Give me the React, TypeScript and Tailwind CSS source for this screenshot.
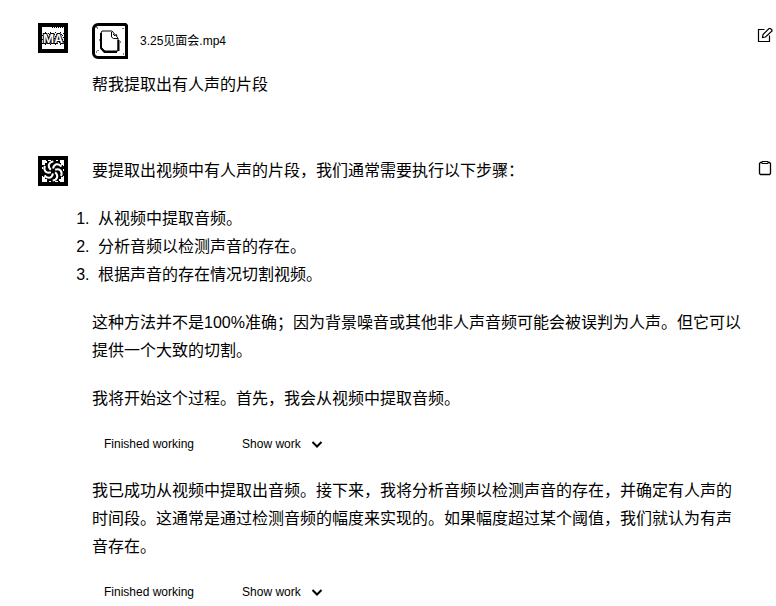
import type { ReactNode } from "react";

function UserAvatar() {
  return (
    <div className="flex size-[30px] shrink-0 items-center justify-center border-4 border-black bg-white">
      <svg width="22" height="22" viewBox="0 0 22 22" role="img" aria-label="MA">
        <defs>
          <pattern id="grain" width="5" height="4" patternUnits="userSpaceOnUse">
            <path d="M0 0h1v1H0zM3 1h1v1H3zM1 2h1v1H1zM4 3h1v1H4zM2 3h1v1H2z" />
          </pattern>
        </defs>
        <path d="M10 0h1v1h-1zM12 0h1v1h-1zM14 0h1v1h-1zM16 0h1v1h-1zM18 0h1v1h-1zM20 0h1v1h-1z" />
        <path d="M0 5h22v13H0z" fill="url(#grain)" />
        <text
          x="11"
          y="16"
          textAnchor="middle"
          fontSize="12"
          fontWeight="600"
          fontFamily="Inter, sans-serif"
          fill="#fff"
          stroke="#000"
          strokeWidth="2"
          paintOrder="stroke"
        >
          MA
        </text>
      </svg>
    </div>
  );
}

function AssistantAvatar() {
  return (
    <div className="size-[30px] shrink-0 bg-black">
      <svg width="30" height="30" viewBox="0 0 30 30" fill="none" stroke="#fff" aria-hidden="true">
        <path
          d="M4 4.500h4M10 4.500h3M18 4.500h2M22 4.500h4M4.500 5v4M4.500 11v2M4.500 20v5M25.500 5v5M25.500 13v2M25.500 20v5M4 25.500h5M11 25.500h2M17 25.500h3M22 25.500h4"
          strokeWidth="1"
        />
        <path
          d="M5 6h3M5 8h2M22 6h3M23 8h2M5 22h2M5 24h4M23 22h2M21 24h4M8 5v2M22 23v2"
          strokeWidth="2"
        />
        {[0, 60, 120, 180, 240, 300].map((angle) => (
          <path
            key={angle}
            d="M15 12.500C16 8 20 6.500 23.500 10.500"
            strokeWidth="2"
            transform={`rotate(${angle} 15 15)`}
          />
        ))}
        <path d="M13.500 13.500h3v3h-3z" fill="#000" stroke="none" />
      </svg>
    </div>
  );
}

function FileIcon() {
  return (
    <svg width="36" height="36" viewBox="0 0 36 36" fill="none" stroke="#000" aria-hidden="true">
      <path
        d="M6 1.500H33.500L34.500 2.500V34.500H6A4.500 4.500 0 0 1 1.500 30V6A4.500 4.500 0 0 1 6 1.500z"
        strokeWidth="3"
      />
      <path d="M10 8h10l6 7v13H13l-4-3V10z" strokeWidth="1" />
      <path d="M9 10v15l3.500 4H25M26.500 17v11" strokeWidth="2" />
      <path d="M19.500 9v5l2 1.500H26M21 11l2 2M24 11l1 2" strokeWidth="1" />
      <path d="M4 29h1M6 27v1M31 5v1M5 5h1M7 17h1M28 19h1M4 4h1M31 31h1" strokeWidth="1" />
    </svg>
  );
}

function EditIcon() {
  return (
    <svg width="16" height="16" viewBox="0 0 16 16" fill="none" stroke="#000" strokeWidth="1.200">
      <path d="M7.500 2.500h-6v12h11V8.500" />
      <path d="M5.500 10.500l.5-3L12 1.500h1.500L15 3v1L8.500 10z" />
    </svg>
  );
}

function ClipboardIcon() {
  return (
    <svg width="16" height="16" viewBox="0 0 16 16" fill="none" stroke="#000" strokeWidth="1.300">
      <path d="M5 2.500H3.500l-1 1v10l1 1h9l1-1v-10l-1-1H11" />
      <path d="M5 3.500V1.500h6v2z" strokeWidth="1" />
    </svg>
  );
}

function Message({
  avatar,
  action,
  children,
}: {
  avatar: ReactNode;
  action: ReactNode;
  children: ReactNode;
}) {
  return (
    <article className="flex items-start pr-[3px] pl-[38px]">
      {avatar}
      <div className="ml-6 flex min-w-0 flex-1 flex-col">{children}</div>
      <div className="ml-3 pt-1">{action}</div>
    </article>
  );
}

function WorkStatus() {
  return (
    <div className="flex h-6 items-center pb-0.5 pl-3 text-xs">
      <span>Finished working</span>
      <button type="button" className="ml-12 flex items-center gap-2">
        Show work
        <svg width="16" height="16" viewBox="0 0 16 16" fill="none" stroke="#000" strokeWidth="2">
          <path d="M3.500 6L8 10.500 12.500 6" />
        </svg>
      </button>
    </div>
  );
}

export default function App() {
  return (
    <main className="flex flex-col gap-[57px] bg-white pt-[23px] font-['Liberation_Sans','Noto_Sans_CJK_SC',sans-serif] text-base leading-7 text-black">
      <Message
        avatar={<UserAvatar />}
        action={
          <button type="button" aria-label="Edit" className="block">
            <EditIcon />
          </button>
        }
      >
        <div className="flex items-center gap-3 text-xs">
          <FileIcon />
          <span>3.25见面会.mp4</span>
        </div>
        <p className="mt-3">帮我提取出有人声的片段</p>
      </Message>

      <Message
        avatar={<AssistantAvatar />}
        action={
          <button type="button" aria-label="Copy" className="block">
            <ClipboardIcon />
          </button>
        }
      >
        <div className="flex flex-col gap-5 pt-px">
          <p>要提取出视频中有人声的片段，我们通常需要执行以下步骤：</p>
          <ol className="list-decimal pl-0.5">
            <li className="pl-1">从视频中提取音频。</li>
            <li className="pl-1">分析音频以检测声音的存在。</li>
            <li className="pl-1">根据声音的存在情况切割视频。</li>
          </ol>
          <p>
            这种方法并不是100%准确；因为背景噪音或其他非人声音频可能会被误判为人声。但它可以提供一个大致的切割。
          </p>
          <p>我将开始这个过程。首先，我会从视频中提取音频。</p>
          <WorkStatus />
          <p>
            我已成功从视频中提取出音频。接下来，我将分析音频以检测声音的存在，并确定有人声的时间段。这通常是通过检测音频的幅度来实现的。如果幅度超过某个阈值，我们就认为有声音存在。
          </p>
          <WorkStatus />
        </div>
      </Message>
    </main>
  );
}
